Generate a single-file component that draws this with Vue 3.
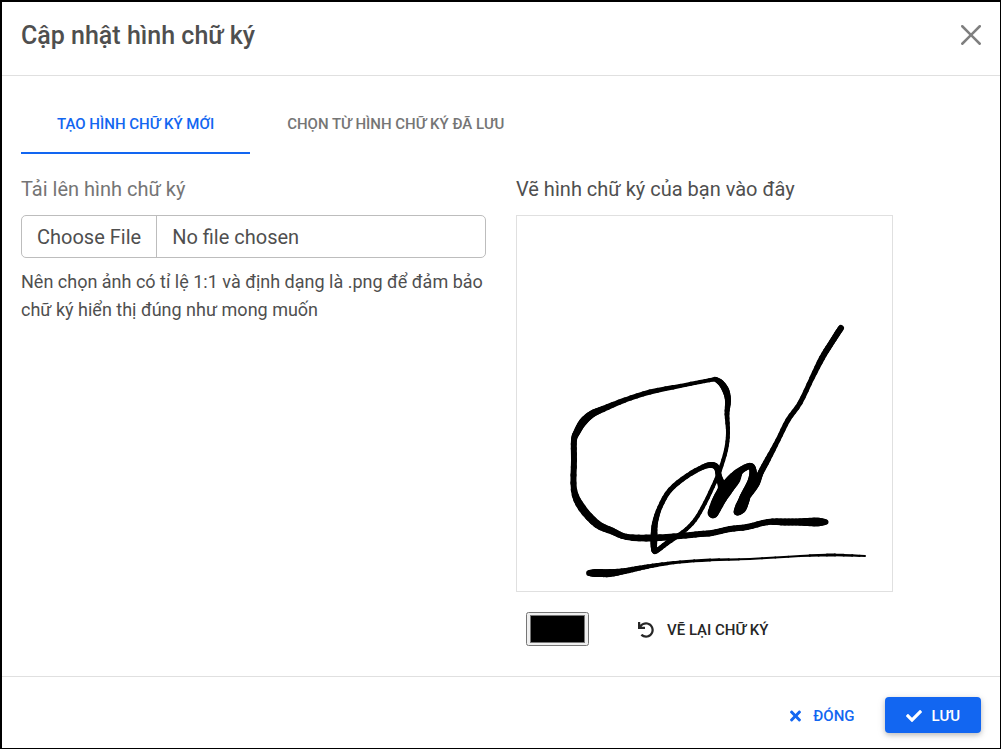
<script setup>
import { ref } from 'vue'

const tabs = ['Tạo hình chữ ký mới', 'Chọn từ hình chữ ký đã lưu']
const activeTab = ref(0)
const penColor = ref('#000000')

// Each pen stroke is a list of [x, y, pen width] samples.
const strokes = [
  [
    [716, 379, 4], [700, 382, 4], [680, 386, 4], [650, 392, 5], [625, 400, 5], [603, 409, 6], [592, 414, 7],
    [583, 422, 8], [577, 432, 7], [574, 440, 6], [574, 460, 6], [574, 490, 6], [582, 508, 8], [597, 524, 8],
    [612, 531, 7], [627, 537, 6], [653, 538, 7], [680, 536, 6], [700, 534, 6], [712, 533, 6], [730, 529, 6],
    [747, 527, 6], [768, 522, 6], [785, 522, 7], [800, 522, 7], [818, 522, 9], [826, 522, 5]
  ],
  [
    [715, 379, 4], [721, 383, 6], [726, 391, 7], [728, 401, 6], [727, 414, 5], [728, 433, 4], [726, 450, 4],
    [720, 470, 4], [715, 482, 4], [705, 503, 4], [695, 520, 4], [683, 532, 4], [667, 543, 5], [656, 551, 5],
    [654, 548, 6], [654, 537, 7], [655, 523, 6], [660, 507, 5], [670, 490, 5], [687, 476, 5], [703, 467, 5],
    [712, 465, 6], [717, 468, 6], [719, 477, 6], [722, 487, 8], [720, 496, 9], [713, 513, 10], [719, 500, 13],
    [726, 489, 14], [734, 479, 13], [740, 471, 7], [750, 466, 6], [753, 471, 7], [752, 480, 8], [747, 491, 8],
    [744, 500, 11], [741, 508, 11], [737, 512, 6], [741, 503, 8], [750, 491, 9], [756, 483, 8], [761, 472, 6],
    [768, 459, 6], [778, 440, 5], [788, 420, 5], [800, 403, 5], [812, 378, 5], [822, 358, 6], [830, 345, 6],
    [837, 334, 6], [841, 328, 6]
  ],
  [
    [589, 573, 5], [597, 573, 8], [610, 573, 8], [625, 571, 6], [640, 568, 5], [657, 565, 4], [680, 562, 3],
    [710, 560, 3], [750, 559, 2], [800, 556, 2], [835, 555, 3], [865, 556, 2]
  ]
]

const spline = (a, b, c, d, t) =>
  0.5 * (2 * b + (c - a) * t + (2 * a - 5 * b + 4 * c - d) * t * t + (3 * b - a - 3 * c + d) * t * t * t)

// Smooth a stroke into short round-capped segments of changing width.
function segmentsOf(points) {
  const steps = 4
  const out = []
  let last = points[0]
  for (let i = 0; i < points.length - 1; i++) {
    const a = points[Math.max(i - 1, 0)]
    const b = points[i]
    const c = points[i + 1]
    const d = points[Math.min(i + 2, points.length - 1)]
    for (let s = 1; s <= steps; s++) {
      const t = s / steps
      const next = [spline(a[0], b[0], c[0], d[0], t), spline(a[1], b[1], c[1], d[1], t), b[2] + (c[2] - b[2]) * t]
      out.push({ x1: last[0], y1: last[1], x2: next[0], y2: next[1], w: next[2] })
      last = next
    }
  }
  return out
}

const segments = ref(strokes.flatMap(segmentsOf))
const clearPad = () => { segments.value = [] }
</script>

<template>
  <section class="dialog" role="dialog" aria-labelledby="dialog-title">
    <header class="header">
      <h1 id="dialog-title">Cập nhật hình chữ ký</h1>
      <button class="close" type="button" aria-label="Đóng">
        <svg viewBox="0 0 16 16" width="20" height="20" fill="currentColor">
          <path d="M.293.293a1 1 0 011.414 0L8 6.586 14.293.293a1 1 0 111.414 1.414L9.414 8l6.293 6.293a1 1 0 01-1.414 1.414L8 9.414l-6.293 6.293a1 1 0 01-1.414-1.414L6.586 8 .293 1.707a1 1 0 010-1.414z" />
        </svg>
      </button>
    </header>

    <main class="body">
      <nav class="tabs" role="tablist">
        <button
          v-for="(tab, i) in tabs"
          :key="tab"
          type="button"
          role="tab"
          class="tab"
          :class="{ active: activeTab === i }"
          :aria-selected="activeTab === i"
          @click="activeTab = i"
        >{{ tab }}</button>
      </nav>

      <div class="columns">
        <div class="upload">
          <label class="label muted" for="signature-file">Tải lên hình chữ ký</label>
          <input id="signature-file" class="file" type="file" accept="image/png" />
          <p class="help">Nên chọn ảnh có tỉ lệ 1:1 và định dạng là .png để đảm bảo chữ ký hiển thị đúng như mong muốn</p>
        </div>

        <div class="draw">
          <label class="label" for="pen-color">Vẽ hình chữ ký của bạn vào đây</label>
          <svg class="pad" viewBox="517 216 375 375" :stroke="penColor" stroke-linecap="round">
            <line
              v-for="(s, i) in segments"
              :key="i"
              :x1="s.x1"
              :y1="s.y1"
              :x2="s.x2"
              :y2="s.y2"
              :stroke-width="s.w"
            />
          </svg>
          <div class="tools">
            <input id="pen-color" v-model="penColor" class="color" type="color" />
            <button class="btn redo" type="button" @click="clearPad">
              <svg viewBox="0 0 512 512" width="16" height="16" fill="currentColor">
                <path d="M212.333 224.333H12c-6.627 0-12-5.373-12-12V12C0 5.373 5.373 0 12 0h48c6.627 0 12 5.373 12 12v78.112C117.773 39.279 184.26 7.47 258.175 8.007c136.906.994 246.448 111.623 246.157 248.532C504.041 393.258 393.12 504 256.333 504c-64.089 0-122.496-24.313-166.51-64.215-5.099-4.622-5.334-12.554-.467-17.42l33.967-33.967c4.474-4.474 11.662-4.717 16.401-.525C170.76 415.336 211.58 432 256.333 432c97.268 0 176-78.716 176-176 0-97.267-78.716-176-176-176-58.496 0-110.28 28.476-142.274 72.333h98.274c6.627 0 12 5.373 12 12v48c0 6.627-5.373 12-12 12z" />
              </svg>
              Vẽ lại chữ ký
            </button>
          </div>
        </div>
      </div>
    </main>

    <footer class="footer">
      <button class="btn link" type="button">
        <svg viewBox="0 0 352 512" width="11" height="16" fill="currentColor">
          <path d="M242.72 256l100.07-100.07c12.28-12.28 12.28-32.19 0-44.48l-22.24-22.24c-12.28-12.28-32.19-12.28-44.48 0L176 189.28 75.93 89.21c-12.28-12.28-32.19-12.28-44.48 0L9.21 111.45c-12.28 12.28-12.28 32.19 0 44.48L109.28 256 9.21 356.07c-12.28 12.28-12.28 32.19 0 44.48l22.24 22.24c12.28 12.28 32.2 12.28 44.48 0L176 322.72l100.07 100.07c12.28 12.28 32.2 12.28 44.48 0l22.24-22.24c12.28-12.28 12.28-32.19 0-44.48L242.72 256z" />
        </svg>
        Đóng
      </button>
      <button class="btn primary" type="button">
        <svg viewBox="0 0 512 512" width="16" height="16" fill="currentColor">
          <path d="M173.898 439.404l-166.4-166.4c-9.997-9.997-9.997-26.206 0-36.204l36.203-36.204c9.997-9.998 26.207-9.998 36.204 0L192 312.69 432.095 72.596c9.997-9.997 26.207-9.997 36.204 0l36.203 36.204c9.997 9.997 9.997 26.206 0 36.204l-294.4 294.401c-9.998 9.997-26.207 9.997-36.204-.001z" />
        </svg>
        Lưu
      </button>
    </footer>
  </section>
</template>

<style>
body {
  margin: 0;
  background: #fff;
}
</style>

<style scoped>
.dialog {
  box-sizing: border-box;
  min-height: 100vh;
  display: flex;
  flex-direction: column;
  border: solid #000;
  border-width: 2px 1px 1px 2px;
  background: #fff;
  color: #4f4f4f;
  font-family: Roboto, "Noto Sans", sans-serif;
}
button {
  font-family: inherit;
  border: 0;
  background: none;
  cursor: pointer;
}
.header {
  display: flex;
  align-items: flex-start;
  justify-content: space-between;
  padding: 16px 19px 21px;
  border-bottom: 1px solid #e0e0e0;
}
h1 {
  margin: 0;
  font-size: 25px;
  line-height: 36px;
  font-weight: 500;
}
.close {
  display: flex;
  padding: 7px 0;
  color: #7f7f7f;
}
.body {
  flex: 1;
  padding: 20px 19px 29px;
}
.tabs {
  display: flex;
  gap: 1px;
  margin-bottom: 20px;
}
.tab {
  padding: 18px 36px;
  border-bottom: 2px solid transparent;
  color: #757575;
  font-size: 15px;
  line-height: 20px;
  font-weight: 500;
  text-transform: uppercase;
}
.tab.active {
  color: #1266f1;
  border-color: #1266f1;
}
.columns {
  display: grid;
  grid-template-columns: 1fr 1fr;
  gap: 30px;
}
.label {
  display: block;
  margin-bottom: 11px;
  font-size: 20px;
  line-height: 30px;
}
.muted {
  color: #757575;
}
.file {
  box-sizing: border-box;
  display: block;
  width: 100%;
  height: 43px;
  border: 1px solid #bdbdbd;
  border-radius: 5px;
  color: #4f4f4f;
  font-family: inherit;
  font-size: 20px;
  line-height: 41px;
}
.file::file-selector-button {
  box-sizing: border-box;
  height: 41px;
  margin: 0 15px 0 0;
  padding: 0 15px;
  border: solid #bdbdbd;
  border-width: 0 1px 0 0;
  background: transparent;
  color: inherit;
  font: inherit;
  line-height: 30px;
}
.help {
  margin: 10px 0 0;
  font-size: 18px;
  line-height: 28px;
}
.pad {
  display: block;
  box-sizing: border-box;
  width: 100%;
  max-width: 377px;
  border: 1px solid #e0e0e0;
}
.tools {
  display: flex;
  align-items: center;
  gap: 25px;
  padding: 19px 10px 0;
}
.color {
  box-sizing: border-box;
  width: 63px;
  height: 34px;
  padding: 0;
}
.color::-webkit-color-swatch-wrapper {
  padding: 2px 3px;
}
.btn {
  display: inline-flex;
  align-items: center;
  padding: 1px 24px 0;
  height: 36px;
  border-radius: 4px;
  font-size: 15px;
  line-height: 20px;
  font-weight: 500;
  text-transform: uppercase;
}
.redo {
  gap: 13px;
  color: #262626;
}
.footer {
  display: flex;
  align-items: center;
  justify-content: flex-end;
  gap: 6px;
  padding: 20px 19px 15px;
  border-top: 1px solid #e0e0e0;
}
.link {
  gap: 12px;
  color: #1266f1;
}
.primary {
  gap: 10px;
  padding: 1px 21px 0;
  background: #1266f1;
  color: #fff;
  box-shadow: 0 2px 5px rgba(0, 0, 0, 0.2), 0 2px 10px rgba(0, 0, 0, 0.1);
}
</style>
